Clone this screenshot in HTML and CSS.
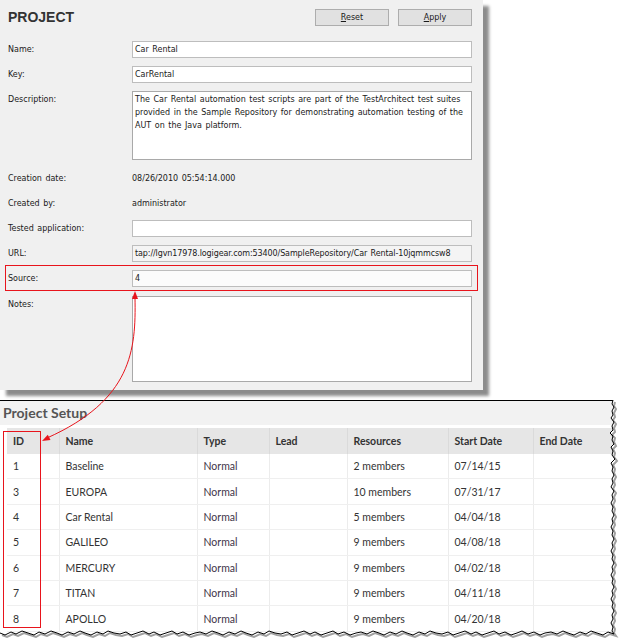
FILE: index.html
```html
<!DOCTYPE html>
<html>
<head>
<meta charset="utf-8">
<link rel="stylesheet" href="styles.css">
</head>
<body>
<div class="page">
  <section class="panel">
    <header class="panel-head">
      <h1>PROJECT</h1>
      <div class="btns">
        <button class="btn"><u>R</u>eset</button>
        <button class="btn"><u>A</u>pply</button>
      </div>
    </header>
    <div class="form">
      <div class="row"><span class="lbl">Name:</span><div class="field">Car Rental</div></div>
      <div class="row"><span class="lbl">Key:</span><div class="field">CarRental</div></div>
      <div class="row"><span class="lbl">Description:</span><div class="field area">The Car Rental automation test scripts are part of the TestArchitect test suites<br>provided in the Sample Repository for demonstrating automation testing of the<br>AUT on the Java platform.</div></div>
      <div class="row spaced"><span class="lbl">Creation date:</span><span class="value">08/26/2010 05:54:14.000</span></div>
      <div class="row"><span class="lbl">Created by:</span><span class="value">administrator</span></div>
      <div class="row"><span class="lbl">Tested application:</span><div class="field"></div></div>
      <div class="row"><span class="lbl">URL:</span><div class="field ro">tap://lgvn17978.logigear.com:53400/SampleRepository/Car Rental-10jqmmcsw8</div></div>
      <div class="row flagged"><span class="lbl">Source:</span><div class="field src">4</div></div>
      <div class="row notes-row"><span class="lbl">Notes:</span><div class="field area notes"></div></div>
    </div>
  </section>

  <section class="setup">
    <h2>Project Setup</h2>
    <table class="grid">
      <colgroup>
        <col class="c-id"><col class="c-name"><col class="c-type"><col class="c-lead"><col class="c-res"><col class="c-start"><col class="c-end">
      </colgroup>
      <thead>
        <tr><th>ID</th><th>Name</th><th>Type</th><th>Lead</th><th>Resources</th><th>Start Date</th><th>End Date</th></tr>
      </thead>
      <tbody>
        <tr><td>1</td><td>Baseline</td><td class="type">Normal</td><td></td><td>2 members</td><td>07/14/15</td><td></td></tr>
        <tr><td>3</td><td>EUROPA</td><td class="type">Normal</td><td></td><td>10 members</td><td>07/31/17</td><td></td></tr>
        <tr><td>4</td><td>Car Rental</td><td class="type">Normal</td><td></td><td>5 members</td><td>04/04/18</td><td></td></tr>
        <tr><td>5</td><td>GALILEO</td><td class="type">Normal</td><td></td><td>9 members</td><td>04/08/18</td><td></td></tr>
        <tr><td>6</td><td>MERCURY</td><td class="type">Normal</td><td></td><td>9 members</td><td>04/02/18</td><td></td></tr>
        <tr><td>7</td><td>TITAN</td><td class="type">Normal</td><td></td><td>9 members</td><td>04/11/18</td><td></td></tr>
        <tr><td>8</td><td>APOLLO</td><td class="type">Normal</td><td></td><td>9 members</td><td>04/20/18</td><td></td></tr>
      </tbody>
    </table>
  </section>

  <svg class="annot" width="626" height="644" viewBox="0 0 626 644">
    <polygon class="tear-cover" points="626,399 613,399 613,400 612,404 614,407 612,411 613,415 611,418 614,422 612,426 613,430 610,433 613,436 612,440 614,444 611,447 613,451 612,455 615,459 611,463 613,467 612,471 614,475 612,479 613,483 611,487 614,491 612,495 613,499 611,503 613,507 612,511 614,515 612,519 613,523 611,527 613,531 612,535 614,539 612,543 613,547 611,551 613,555 612,559 614,563 612,567 613,571 611,575 613,579 612,583 614,587 612,591 613,595 611,599 613,603 612,607 614,611 612,615 613,619 611,623 613,627 612,631 614,634 608,632 603,635 597,633 591,631 586,634 580,632 574,635 568,633 563,631 557,634 551,632 545,633 540,635 534,632 528,634 522,631 517,633 511,635 505,632 499,634 494,631 488,633 482,635 476,632 471,634 465,631 459,633 453,635 448,632 442,634 436,633 430,631 425,634 419,632 413,635 407,633 402,631 396,634 390,632 384,635 379,633 373,631 367,634 361,632 356,633 350,635 344,632 338,634 333,631 327,633 321,635 315,632 310,634 304,631 298,633 292,635 287,632 281,634 275,633 269,631 264,634 258,632 252,635 246,633 241,631 235,634 229,632 223,635 218,633 212,631 206,634 200,632 195,633 189,635 183,632 177,634 172,631 166,633 160,635 154,632 149,634 143,631 137,633 131,635 126,632 120,634 114,633 108,631 103,634 97,632 91,635 85,633 80,631 74,634 68,632 62,635 57,633 51,631 45,634 39,632 34,635 28,633 22,631 16,634 11,632 5,635 0,633 0,644 626,644"/>
    <g class="tear-shadow" transform="translate(2,2)">
      <polyline points="613,400 612,404 614,407 612,411 613,415 611,418 614,422 612,426 613,430 610,433 613,436 612,440 614,444 611,447 613,451 612,455 615,459 611,463 613,467 612,471 614,475 612,479 613,483 611,487 614,491 612,495 613,499 611,503 613,507 612,511 614,515 612,519 613,523 611,527 613,531 612,535 614,539 612,543 613,547 611,551 613,555 612,559 614,563 612,567 613,571 611,575 613,579 612,583 614,587 612,591 613,595 611,599 613,603 612,607 614,611 612,615 613,619 611,623 613,627 612,631 614,634 608,632 603,635 597,633 591,631 586,634 580,632 574,635 568,633 563,631 557,634 551,632 545,633 540,635 534,632 528,634 522,631 517,633 511,635 505,632 499,634 494,631 488,633 482,635 476,632 471,634 465,631 459,633 453,635 448,632 442,634 436,633 430,631 425,634 419,632 413,635 407,633 402,631 396,634 390,632 384,635 379,633 373,631 367,634 361,632 356,633 350,635 344,632 338,634 333,631 327,633 321,635 315,632 310,634 304,631 298,633 292,635 287,632 281,634 275,633 269,631 264,634 258,632 252,635 246,633 241,631 235,634 229,632 223,635 218,633 212,631 206,634 200,632 195,633 189,635 183,632 177,634 172,631 166,633 160,635 154,632 149,634 143,631 137,633 131,635 126,632 120,634 114,633 108,631 103,634 97,632 91,635 85,633 80,631 74,634 68,632 62,635 57,633 51,631 45,634 39,632 34,635 28,633 22,631 16,634 11,632 5,635 0,633"/>
    </g>
    <polyline class="tear-line" points="613,400 612,404 614,407 612,411 613,415 611,418 614,422 612,426 613,430 610,433 613,436 612,440 614,444 611,447 613,451 612,455 615,459 611,463 613,467 612,471 614,475 612,479 613,483 611,487 614,491 612,495 613,499 611,503 613,507 612,511 614,515 612,519 613,523 611,527 613,531 612,535 614,539 612,543 613,547 611,551 613,555 612,559 614,563 612,567 613,571 611,575 613,579 612,583 614,587 612,591 613,595 611,599 613,603 612,607 614,611 612,615 613,619 611,623 613,627 612,631 614,634 608,632 603,635 597,633 591,631 586,634 580,632 574,635 568,633 563,631 557,634 551,632 545,633 540,635 534,632 528,634 522,631 517,633 511,635 505,632 499,634 494,631 488,633 482,635 476,632 471,634 465,631 459,633 453,635 448,632 442,634 436,633 430,631 425,634 419,632 413,635 407,633 402,631 396,634 390,632 384,635 379,633 373,631 367,634 361,632 356,633 350,635 344,632 338,634 333,631 327,633 321,635 315,632 310,634 304,631 298,633 292,635 287,632 281,634 275,633 269,631 264,634 258,632 252,635 246,633 241,631 235,634 229,632 223,635 218,633 212,631 206,634 200,632 195,633 189,635 183,632 177,634 172,631 166,633 160,635 154,632 149,634 143,631 137,633 131,635 126,632 120,634 114,633 108,631 103,634 97,632 91,635 85,633 80,631 74,634 68,632 62,635 57,633 51,631 45,634 39,632 34,635 28,633 22,631 16,634 11,632 5,635 0,633"/>

    <rect class="hl" x="3.5" y="431.5" width="37" height="196" fill="none" stroke="#e8141c"/>
    <path class="link" d="M135,298 C136,350 132,400 47,438" fill="none" stroke="#e8141c"/>
    <polygon class="head" points="135,291 132,299 138,299" fill="#e8141c"/>
    <polygon class="head" points="42,441 50.5,440.1 47.8,434.7" fill="#e8141c"/>
  </svg>
</div>
</body>
</html>
```

FILE: styles.css
```css
html, body {
  margin: 0;
  padding: 0;
  background: #ffffff;
}

.page {
  position: relative;
  width: 626px;
  height: 644px;
  overflow: hidden;
  font-family: "DejaVu Sans", sans-serif;
}

/* ---------- Project panel ---------- */
.panel {
  width: 483px;
  box-sizing: border-box;
  background: #f0f0f0;
  padding: 0 11px 8px 8px;
  box-shadow: 6px 6px 3px rgba(0, 0, 0, 0.45);
  font-size: 8px;
  word-spacing: 1px;
  color: #1a1a1a;
}

.panel-head {
  display: flex;
  justify-content: space-between;
  align-items: flex-start;
  height: 33px;
  margin-bottom: 8px;
}

.panel-head h1 {
  margin: 0;
  padding-top: 10px;
  font: bold 14px/14px "Liberation Sans", Arial, sans-serif;
  color: #333333;
  word-spacing: 0;
}

.btns {
  display: flex;
  gap: 9px;
  padding-top: 9px;
}

.btn {
  width: 74px;
  height: 17px;
  padding: 0;
  box-sizing: border-box;
  background: #e1e1e1;
  border: 1px solid #adadad;
  font: 8px/15px "DejaVu Sans", sans-serif;
  color: #1a1a1a;
}

.form {
  display: flex;
  flex-direction: column;
  gap: 8px;
}

.row {
  display: flex;
  align-items: flex-start;
}

.row.spaced {
  margin-top: 2px;
}

.row.notes-row {
  margin-top: 1px;
}

.row.flagged {
  position: relative;
}

.row.flagged::after {
  content: "";
  position: absolute;
  left: -3px;
  top: -5px;
  right: -6px;
  bottom: -4px;
  border: 1px solid #e8141c;
  pointer-events: none;
}

.lbl {
  width: 124px;
  flex: none;
  line-height: 17px;
}

.value {
  line-height: 17px;
}

.field {
  width: 340px;
  height: 17px;
  box-sizing: border-box;
  background: #ffffff;
  border: 1px solid #bdbdbd;
  padding: 0 2px;
  line-height: 15px;
  white-space: nowrap;
  overflow: hidden;
}

.field.ro {
  background: #f4f4f4;
  letter-spacing: -0.1px;
}

.field.src {
  background: #fbfbfb;
}

.field.area {
  height: 69px;
  border-color: #a9a9a9;
  padding-top: 1px;
  line-height: 13px;
}

.field.notes {
  height: 86px;
}

/* ---------- Project setup ---------- */
.setup {
  margin-top: 10px;
  border-top: 1px solid #000000;
  font-family: Lato, "Open Sans", sans-serif;
}

.setup h2 {
  margin: 0;
  height: 24px;
  padding-left: 3px;
  background: #f2f2f2;
  font: bold 14px/24px Lato, sans-serif;
  color: #555555;
}

.grid {
  margin: 3px 0 0 7px;
  border-collapse: collapse;
  table-layout: fixed;
  width: 626px;
  font-size: 10.5px;
  color: #333333;
}

.c-id { width: 52px; }
.c-name { width: 138px; }
.c-type { width: 72px; }
.c-lead { width: 78px; }
.c-res { width: 101px; }
.c-start { width: 85px; }
.c-end { width: 100px; }

.grid th {
  height: 26px;
  padding: 0 6px;
  background: #e6e6e6;
  text-align: left;
  font-weight: bold;
  border-left: 1px solid #dadada;
}

.grid td {
  height: 24.4px;
  padding: 0 6px;
  border-left: 1px solid #ececec;
  border-bottom: 1px solid #efefef;
  white-space: nowrap;
}

.grid th:first-child,
.grid td:first-child {
  border-left: none;
}

.grid td.type {
  color: #3e3549;
}

/* ---------- annotations / torn edge ---------- */
.annot {
  position: absolute;
  left: 0;
  top: 0;
  pointer-events: none;
}

.tear-cover {
  fill: #ffffff;
}

.tear-shadow polyline {
  fill: none;
  stroke: #a0a0a0;
  stroke-width: 2;
}

.tear-line {
  fill: none;
  stroke: #000000;
  stroke-width: 1;
}

.hl {
  fill: none;
  stroke: #e8141c;
  stroke-width: 1;
}

.link {
  fill: none;
  stroke: #e8141c;
  stroke-width: 1;
}

.head {
  fill: #e8141c;
}
```
